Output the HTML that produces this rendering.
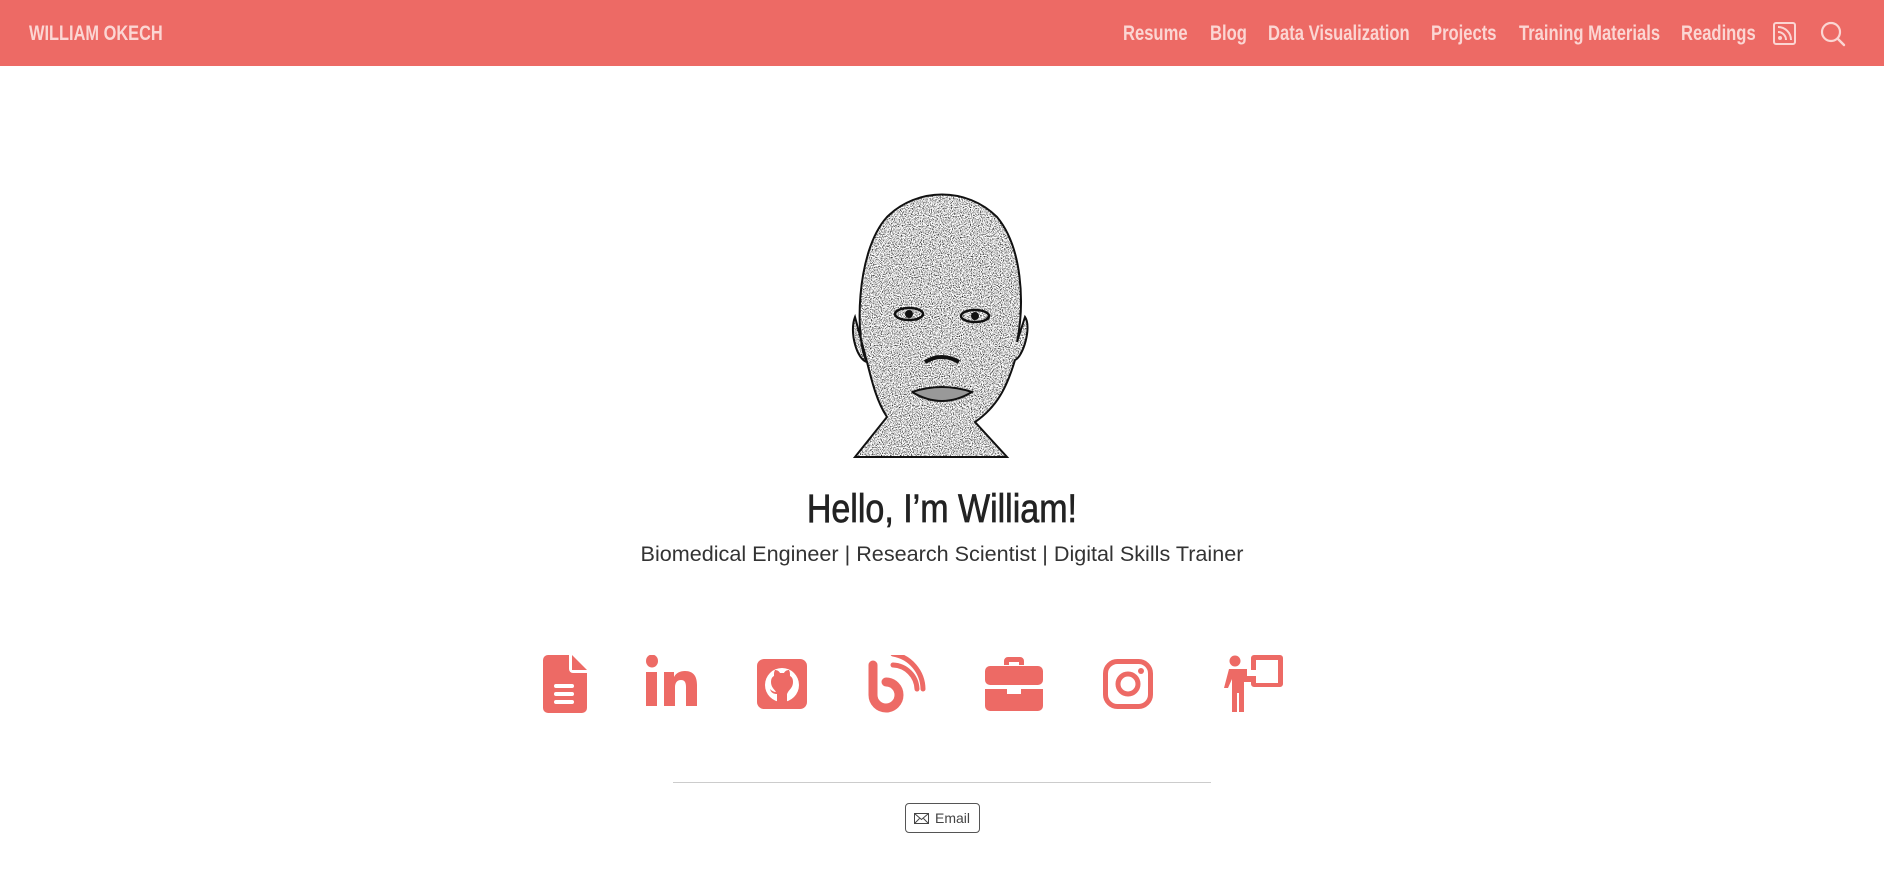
<!DOCTYPE html>
<html><head><meta charset="utf-8"><style>
*{margin:0;padding:0;box-sizing:border-box}
body{width:1884px;height:879px;background:#fff;font-family:"Liberation Sans",sans-serif;position:relative;overflow:hidden}
.nav{position:absolute;left:0;top:0;width:1884px;height:66px;background:#ed6a65}
.nav span{position:absolute;top:22px;font-weight:bold;font-size:21px;color:#fbd6d3;white-space:nowrap;transform:scaleX(0.79);transform-origin:0 0}
.abs{position:absolute}
h1{position:absolute;left:0;width:1884px;top:487px;text-align:center;font-weight:normal;font-size:40px;color:#222}
h1 span{display:inline-block;transform:scaleX(0.85);-webkit-text-stroke:0.7px #222}
.sub{position:absolute;left:0;width:1884px;top:541px;text-align:center;font-size:21.6px;color:#333}
.hr{position:absolute;left:673px;width:538px;top:782px;height:1px;background:#ccc}
.btn{position:absolute;left:905px;top:803px;width:75px;height:30px;border:1px solid #555;border-radius:4px;font-size:14px;color:#444;padding:6px 0 0 29px}
</style></head><body>
<div class="nav">
<span style="left:29px;font-size:21px;transform:scaleX(0.78)">WILLIAM OKECH</span>
<span style="left:1123px">Resume</span>
<span style="left:1210px">Blog</span>
<span style="left:1268px">Data Visualization</span>
<span style="left:1431px">Projects</span>
<span style="left:1519px">Training Materials</span>
<span style="left:1681px">Readings</span>
<svg class="abs" style="left:1773px;top:22px" width="23" height="23" viewBox="0 0 23 23"><rect x="1" y="1" width="21" height="21" rx="2" fill="none" stroke="#fbd6d3" stroke-width="2"/><circle cx="7" cy="16" r="2" fill="#fbd6d3"/><path d="M5 10a8 8 0 0 1 8 8M5 5a13 13 0 0 1 13 13" fill="none" stroke="#fbd6d3" stroke-width="2"/></svg>
<svg class="abs" style="left:1819px;top:20px" width="28" height="28" viewBox="0 0 28 28"><circle cx="12" cy="12" r="9" fill="none" stroke="#fbd6d3" stroke-width="2.2"/><path d="M19 19l6 6" stroke="#fbd6d3" stroke-width="2.4" stroke-linecap="round"/></svg>
</div>

<svg class="abs" style="left:847px;top:192px" width="182" height="270" viewBox="0 0 182 270">
<defs>
<filter id="n"><feTurbulence type="fractalNoise" baseFrequency="0.9" numOctaves="2" seed="3"/><feColorMatrix type="matrix" values="0 0 0 0 0  0 0 0 0 0  0 0 0 0 0  0 0 0 -2.8 1.55"/></filter>
<clipPath id="c"><path d="M20 170 C8 150 8 60 40 25 C70 -5 120 -5 150 25 C175 55 178 110 170 150 L178 125 C185 135 176 165 168 168 C160 195 150 215 128 230 L160 265 L8 265 L40 225 C30 210 25 190 20 170 C10 168 2 140 8 125 Z"/></clipPath>
</defs>
<g clip-path="url(#c)"><rect width="182" height="270" fill="#fff"/><rect width="182" height="270" filter="url(#n)"/></g>
<path d="M20 170 C8 150 8 60 40 25 C70 -5 120 -5 150 25 C175 55 178 110 170 150 L178 125 C185 135 176 165 168 168 C160 195 150 215 128 230 L160 265 L8 265 L40 225 C30 210 25 190 20 170 C10 168 2 140 8 125 Z" fill="none" stroke="#111" stroke-width="2"/>
<ellipse cx="62" cy="122" rx="14" ry="6" fill="none" stroke="#111" stroke-width="2.5"/><circle cx="62" cy="122" r="4" fill="#111"/>
<ellipse cx="128" cy="124" rx="14" ry="6" fill="none" stroke="#111" stroke-width="2.5"/><circle cx="128" cy="124" r="4" fill="#111"/>
<path d="M78 170 q17 -10 34 0" fill="none" stroke="#111" stroke-width="4"/>
<path d="M65 200 q30 -10 60 0 q-30 18 -60 0" fill="#999" stroke="#111" stroke-width="2"/>
</svg>

<h1><span>Hello, I’m William!</span></h1>
<div class="sub">Biomedical Engineer | Research Scientist | Digital Skills Trainer</div>

<svg class="abs" style="left:543px;top:655px" width="44" height="58" viewBox="0 0 44 58"><path d="M5 0H26V14a4 4 0 0 0 4 4H44V53a5 5 0 0 1-5 5H5a5 5 0 0 1-5-5V5a5 5 0 0 1 5-5z M29 0L44 15H29z" fill="#ed6a65"/><rect x="11" y="29" width="20" height="4" rx="2" fill="#fff"/><rect x="11" y="37" width="20" height="4" rx="2" fill="#fff"/><rect x="11" y="45" width="20" height="4" rx="2" fill="#fff"/></svg>
<svg class="abs" style="left:646px;top:655px" width="52" height="52" viewBox="0 0 52 52"><ellipse cx="6" cy="6" rx="6" ry="6.5" fill="#ed6a65"/><rect x="0" y="17" width="11" height="34" fill="#ed6a65"/><path d="M18 17h10v5c2-4 6-6 11-6 9 0 12 6 12 14v21H40V32c0-4-1-7-5-7s-6 3-6 7v19H18z" fill="#ed6a65"/></svg>
<svg class="abs" style="left:757px;top:659px" width="50" height="50" viewBox="0 0 50 50"><rect width="50" height="50" rx="7" fill="#ed6a65"/><circle cx="25" cy="26" r="17" fill="#fff"/><path d="M20 43v-8c-3 0-6-1-7-5 2 2 4 3 6 3-2-3-5-5-5-10 0-3 1-5 3-6 0-3 0-4 1-6 2 0 4 1 5 3h4c1-2 3-3 5-3 1 2 1 3 1 6 2 1 3 3 3 6 0 5-3 7-5 10l-1 2v8z" fill="#ed6a65"/></svg>
<svg class="abs" style="left:868px;top:655px" width="58" height="58" viewBox="0 0 58 58"><path d="M5 10v30a13 13 0 1 0 13-13" fill="none" stroke="#ed6a65" stroke-width="9" stroke-linecap="round"/><path d="M25 10a25 25 0 0 1 24 24M25 -1a36 36 0 0 1 30 35" fill="none" stroke="#ed6a65" stroke-width="5" stroke-linecap="round"/></svg>
<svg class="abs" style="left:985px;top:657px" width="58" height="54" viewBox="0 0 58 54"><path d="M19 8V4a4 4 0 0 1 4-4h12a4 4 0 0 1 4 4v4h-5V5H24v3z" fill="#ed6a65"/><rect y="9" width="58" height="19" rx="5" fill="#ed6a65"/><path d="M0 32h22v5h14v-5h22v17a5 5 0 0 1-5 5H5a5 5 0 0 1-5-5z" fill="#ed6a65"/></svg>
<svg class="abs" style="left:1103px;top:659px" width="50" height="50" viewBox="0 0 50 50"><rect x="2.5" y="2.5" width="45" height="45" rx="12" fill="none" stroke="#ed6a65" stroke-width="5"/><circle cx="25" cy="25" r="10" fill="none" stroke="#ed6a65" stroke-width="5"/><circle cx="38" cy="12" r="3" fill="#ed6a65"/></svg>
<svg class="abs" style="left:1216px;top:655px" width="70" height="58" viewBox="0 0 70 58"><circle cx="19" cy="6" r="5.5" fill="#ed6a65"/><path d="M13 14h18v7h9v6H28v30h-5V38h-2v19h-5V24l-4 9h-4z" fill="#ed6a65"/><path d="M35 3a3 3 0 0 1 3-3h26a3 3 0 0 1 3 3v26a3 3 0 0 1-3 3H38a3 3 0 0 1-3-3v-4h5v3h22V5H40v10h-5z" fill="#ed6a65"/></svg>

<div class="hr"></div>
<div class="btn"><svg class="abs" style="left:8px;top:9px" width="15" height="11" viewBox="0 0 15 11"><rect x=".5" y=".5" width="14" height="10" fill="none" stroke="#444"/><path d="M.5 .5l7 6 7-6M.5 10.5l5-5M14.5 10.5l-5-5" fill="none" stroke="#444"/></svg>Email</div>
</body></html>
